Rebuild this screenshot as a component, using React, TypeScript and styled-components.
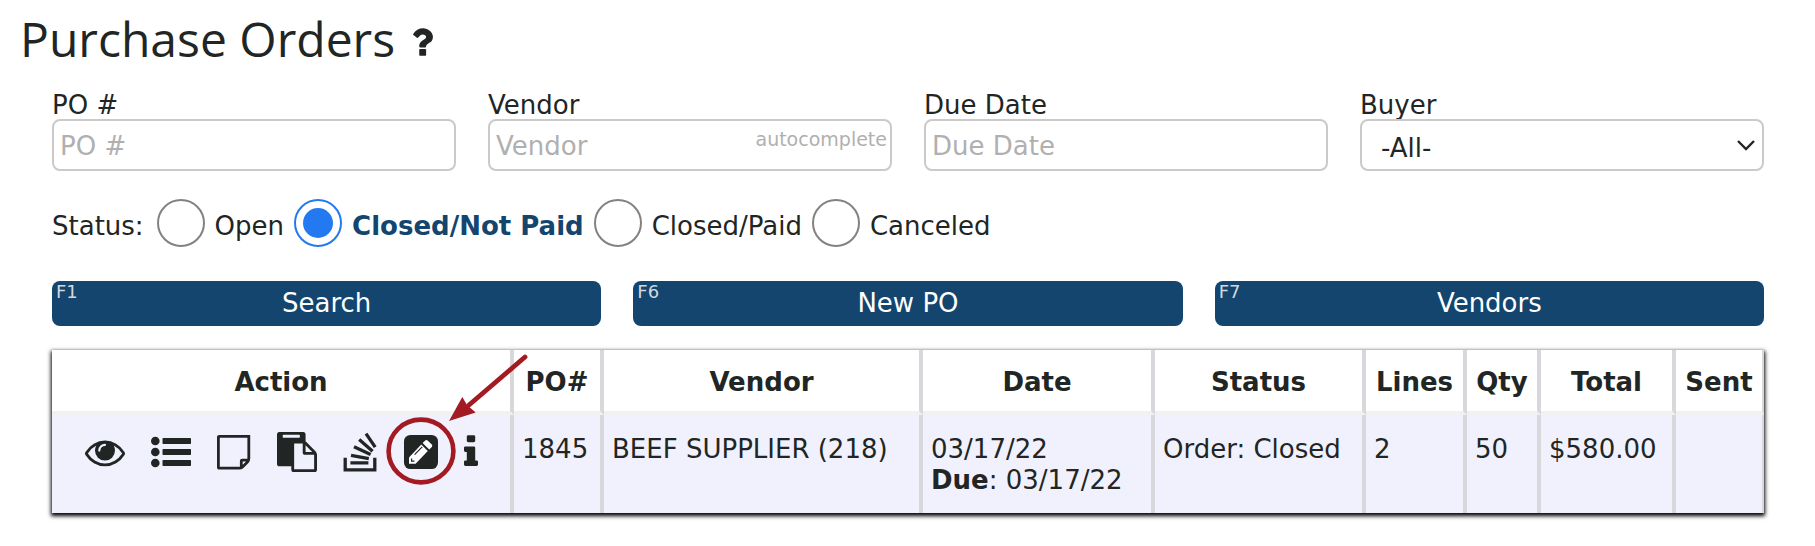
import React from "react";
import styled, { createGlobalStyle, css } from "styled-components";

const ink = "#212624";
const navy = "#13456f";
const red = "#a31a22";
const sans = `"DejaVu Sans", Verdana, sans-serif`;

const GlobalStyle = createGlobalStyle`
  * { box-sizing: border-box; }
  body {
    margin: 0;
    background: #fff;
    color: ${ink};
    font: 26px/31px ${sans};
  }
`;

const Page = styled.main`
  padding: 0 51px 32px 52px;
`;

const Header = styled.header`
  display: flex;
  align-items: center;
  gap: 16px;
  margin-left: -32px;
  padding-top: 4px;
`;

const Title = styled.h1`
  margin: 0;
  font: 400 48px/70px "Open Sans", "Segoe UI", sans-serif;
`;

const IconButton = styled.button`
  position: relative;
  display: flex;
  padding: 0;
  border: 0;
  background: none;
  color: inherit;
  cursor: pointer;
`;

const HelpButton = styled(IconButton)`
  padding-top: 6px;
`;

const Glyph = styled.svg`
  display: block;
  height: 40px;
  fill: currentColor;
`;

const Filters = styled.form`
  display: grid;
  grid-template-columns: repeat(4, 1fr);
  column-gap: 32px;
  margin-top: 17px;
`;

const Field = styled.div`
  position: relative;
  display: flex;
  flex-direction: column;
`;

const FieldLabel = styled.label`
  line-height: 28px;
`;

const control = css`
  width: 100%;
  height: 52px;
  border: 2px solid #cacacb;
  border-radius: 8px;
  background: transparent;
  color: ${ink};
  font: 26px/31px ${sans};
`;

const TextInput = styled.input`
  ${control}
  padding: 2px 6px 0;
  &::placeholder {
    color: #b0b0b0;
    opacity: 1;
  }
`;

const Select = styled.select`
  ${control}
  padding: 6px 40px 0 19px;
  appearance: none;
`;

const Chevron = styled.svg`
  position: absolute;
  right: 9px;
  bottom: 20px;
  width: 18px;
  height: 12px;
  pointer-events: none;
`;

const Hint = styled.span`
  position: absolute;
  right: 5px;
  top: 36px;
  color: #b0b0b0;
  font-size: 19px;
  line-height: 24px;
`;

const StatusGroup = styled.div`
  display: flex;
  align-items: center;
  gap: 10px;
  margin-top: 28px;
`;

const StatusText = styled.span`
  padding-top: 7px;
`;

const StatusOption = styled.label`
  display: flex;
  align-items: center;
  gap: 10px;
`;

const GroupTitle = styled(StatusText)`
  padding-right: 3px;
`;

const OptionText = styled(StatusText)`
  input:checked + & {
    color: ${navy};
    font-weight: 700;
  }
`;

const Radio = styled.input`
  width: 48px;
  height: 48px;
  margin: 0;
  appearance: none;
  border: 2px solid #858180;
  border-radius: 50%;
  display: grid;
  place-items: center;
  &:checked {
    border-color: #2379f0;
  }
  &:checked::before {
    content: "";
    width: 30px;
    height: 30px;
    border-radius: 50%;
    background: #2379f0;
  }
`;

const Actions = styled.div`
  display: grid;
  grid-template-columns: repeat(3, 1fr);
  column-gap: 32px;
  margin-top: 34px;
`;

const ActionButton = styled.button`
  position: relative;
  height: 45px;
  padding: 0;
  border: 0;
  border-radius: 8px;
  background: ${navy};
  color: #fff;
  font: 26px/31px ${sans};
  cursor: pointer;
`;

const Shortcut = styled.kbd`
  position: absolute;
  left: 4px;
  top: 0;
  color: #d4d8dc;
  font: 18px/22px ${sans};
`;

const Orders = styled.table`
  width: 100%;
  margin-top: 24px;
  table-layout: fixed;
  border-collapse: separate;
  border-spacing: 0;
  box-shadow: 0 2px 4px 1px #000;
`;

const Col = styled.col<{ $width?: number }>`
  width: ${(p) => (p.$width ? `${p.$width}px` : "auto")};
`;

const cell = css`
  border-right: 4px solid #d8d8dc;
  white-space: nowrap;
  &:last-child {
    border-right-width: 2px;
  }
`;

const HeadCell = styled.th`
  ${cell}
  height: 65px;
  padding: 3px 0 0;
  border-bottom: 4px solid #f1f1f2;
  background: #fff;
  font-weight: 700;
`;

const Cell = styled.td`
  ${cell}
  padding: 19px 8px 17px;
  background: #f1f1fd;
  vertical-align: top;
`;

const ActionCell = styled(Cell)`
  padding-top: 17px;
`;

const IconRow = styled.div`
  display: flex;
  justify-content: center;
  gap: 26px;
`;

const Callout = styled.svg`
  position: absolute;
  left: -18px;
  top: -79px;
  width: 144px;
  height: 134px;
  pointer-events: none;
`;

const questionPath =
  "M1088 1256v240q0 16-12 28t-28 12h-240q-16 0-28-12t-12-28v-240q0-16 12-28t28-12h240q16 0 28 12t12 28zm316-600q0 54-15.5 101t-35 76.5-55 59.5-57.5 43.5-61 35.5q-41 23-68.5 65t-27.5 67q0 17-12 32.5t-28 15.5h-240q-15 0-25.5-18.5t-10.5-37.5v-45q0-83 65-156.5t143-108.5q59-27 84-56t25-76q0-42-46.5-74t-107.5-32q-65 0-108 29-35 25-107 115-13 16-31 16-12 0-25-8l-164-125q-13-10-15.5-25t5.5-28q160-266 464-266 80 0 161 31t146 83 106 127.5 41 158.5z";
const eyePath =
  "M1664 960q-152-236-381-353 61 104 61 225 0 185-131.5 316.5t-316.5 131.5-316.5-131.5-131.5-316.5q0-121 61-225-229 117-381 353 133 205 333.5 326.5t434.5 121.5 434.5-121.5 333.5-326.5zm-720-384q0-20-14-34t-34-14q-125 0-214.5 89.5t-89.5 214.5q0 20 14 34t34 14 34-14 14-34q0-86 61-147t147-61q20 0 34-14t14-34zm848 384q0 34-20 69-140 230-376.5 368.5t-499.5 138.5-499.5-139-376.5-368q-20-35-20-69t20-69q140-229 376.5-368t499.5-139 499.5 139 376.5 368q20 35 20 69z";
const pastePath =
  "M768 1664h896v-640h-416q-40 0-68-28t-28-68v-416h-384v1152zm256-1440v-64q0-13-9.5-22.5t-22.5-9.5h-704q-13 0-22.5 9.5t-9.5 22.5v64q0 13 9.5 22.5t22.5 9.5h704q13 0 22.5-9.5t9.5-22.5zm256 672h299l-299-299v299zm512 128v672q0 40-28 68t-68 28h-960q-40 0-68-28t-28-68v-160h-544q-40 0-68-28t-28-68v-1344q0-40 28-68t68-28h1088q40 0 68 28t28 68v328q21 13 36 28l408 408q28 28 48 76t20 88z";
const infoPath =
  "M1216 1344v128q0 26-19 45t-45 19h-512q-26 0-45-19t-19-45v-128q0-26 19-45t45-19h64v-384h-64q-26 0-45-19t-19-45v-128q0-26 19-45t45-19h384q26 0 45 19t19 45v576h64q26 0 45 19t19 45zm-128-1152v192q0 26-19 45t-45 19h-256q-26 0-45-19t-19-45v-192q0-26 19-45t45-19h256q26 0 45 19t19 45z";

const EyeIcon = () => (
  <Glyph viewBox="0 0 1792 1792" width="40"><path d={eyePath} /></Glyph>
);

const ListIcon = () => (
  <Glyph viewBox="0 0 40 40" width="40">
    {[9, 20, 31].map((y) => (
      <g key={y}>
        <circle cx="4.3" cy={y} r="4.3" />
        <rect x="11.5" y={y - 2.9} width="28.5" height="5.8" rx="0.7" />
      </g>
    ))}
  </Glyph>
);

const NoteIcon = () => (
  <Glyph viewBox="0 0 34 40" width="34">
    <path
      d="M2.2 4.4h29.6v22.4q0 1.8-1.3 3.1l-5 5q-1.3 1.3-3.1 1.3H2.2q-.8 0-.8-.8V5.2q0-.8.8-.8zM24.3 36v-7q0-.8.8-.8h7"
      fill="none"
      stroke="currentColor"
      strokeWidth="2.8"
    />
  </Glyph>
);

const PasteIcon = () => (
  <Glyph viewBox="0 0 1792 1792" width="40"><path d={pastePath} /></Glyph>
);

const StackIcon = () => (
  <Glyph viewBox="0 0 35 40" width="35">
    <path
      d="M2.2 25.7v12.2h29.6V25.7M7.4 30.8h18M8 23.4l17.8 3.2M11 14.8l16.6 7.6M16.2 7.6l13.4 11.6M23 1.6l9.2 13.6"
      fill="none"
      stroke="currentColor"
      strokeWidth="3.3"
    />
  </Glyph>
);

const EditIcon = () => (
  <Glyph viewBox="0 0 34 40" width="34">
    <rect y="3" width="34" height="34" rx="6.4" />
    <path d="M5 25.5v6.3h6.6L23.8 19l-6.6-6.6z" fill="#fff" />
    <path d="M18.6 11l6.6 6.6 2.6-2.6q1-1.2 0-2.4l-4.2-4.2q-1.2-1-2.4 0z" fill="#fff" />
    <path d="M10.6 22.6l7.6-7.8M7.6 26.4v2.8h2.8" fill="none" stroke="currentColor" strokeWidth="1.2" />
  </Glyph>
);

const InfoIcon = () => (
  <Glyph viewBox="576 0 640 1792" width="14"><path d={infoPath} /></Glyph>
);

const EditCallout = () => (
  <Callout viewBox="386 352 144 134" aria-hidden="true">
    <ellipse cx="421" cy="450" rx="32.4" ry="31.4" fill="none" stroke={red} strokeWidth="4.6" />
    <path d="M469 404L525 356" stroke={red} strokeWidth="4.8" strokeLinecap="round" />
    <path d="M449 420L462.3 396l4.7 8 8.7 7.5z" fill={red} />
  </Callout>
);

const statuses = ["Open", "Closed/Not Paid", "Closed/Paid", "Canceled"];

const commands = [
  { keyName: "F1", label: "Search" },
  { keyName: "F6", label: "New PO" },
  { keyName: "F7", label: "Vendors" },
];

const columns: { label: string; width?: number }[] = [
  { label: "Action", width: 462 },
  { label: "PO#", width: 90 },
  { label: "Vendor" },
  { label: "Date", width: 232 },
  { label: "Status", width: 211 },
  { label: "Lines", width: 101 },
  { label: "Qty", width: 74 },
  { label: "Total", width: 135 },
  { label: "Sent", width: 88 },
];

const rowActions = [
  { label: "View", Icon: EyeIcon },
  { label: "Lines", Icon: ListIcon },
  { label: "Note", Icon: NoteIcon },
  { label: "Copy", Icon: PasteIcon },
  { label: "Receive", Icon: StackIcon },
  { label: "Edit", Icon: EditIcon, callout: true },
  { label: "Info", Icon: InfoIcon },
];

export default function App() {
  return (
    <>
      <GlobalStyle />
      <Page>
        <Header>
          <Title>Purchase Orders</Title>
          <HelpButton type="button" aria-label="Help">
            <Glyph viewBox="384 0 1024 1792" width="22"><path d={questionPath} /></Glyph>
          </HelpButton>
        </Header>

        <Filters>
          <Field>
            <FieldLabel htmlFor="po">PO #</FieldLabel>
            <TextInput id="po" placeholder="PO #" />
          </Field>
          <Field>
            <FieldLabel htmlFor="vendor">Vendor</FieldLabel>
            <TextInput id="vendor" placeholder="Vendor" />
            <Hint>autocomplete</Hint>
          </Field>
          <Field>
            <FieldLabel htmlFor="due">Due Date</FieldLabel>
            <TextInput id="due" placeholder="Due Date" />
          </Field>
          <Field>
            <FieldLabel htmlFor="buyer">Buyer</FieldLabel>
            <Select id="buyer">
              <option>-All-</option>
            </Select>
            <Chevron viewBox="0 0 18 12" aria-hidden="true">
              <path d="M1 2l8 8 8-8" fill="none" stroke={ink} strokeWidth="2.4" />
            </Chevron>
          </Field>
        </Filters>

        <StatusGroup role="radiogroup" aria-labelledby="status-label">
          <GroupTitle id="status-label">Status:</GroupTitle>
          {statuses.map((name) => (
            <StatusOption key={name}>
              <Radio type="radio" name="status" defaultChecked={name === "Closed/Not Paid"} />
              <OptionText>{name}</OptionText>
            </StatusOption>
          ))}
        </StatusGroup>

        <Actions>
          {commands.map((c) => (
            <ActionButton key={c.keyName} type="button">
              <Shortcut>{c.keyName}</Shortcut>
              {c.label}
            </ActionButton>
          ))}
        </Actions>

        <Orders>
          <colgroup>
            {columns.map((c) => (
              <Col key={c.label} $width={c.width} />
            ))}
          </colgroup>
          <thead>
            <tr>
              {columns.map((c) => (
                <HeadCell key={c.label} scope="col">{c.label}</HeadCell>
              ))}
            </tr>
          </thead>
          <tbody>
            <tr>
              <ActionCell>
                <IconRow>
                  {rowActions.map(({ label, Icon, callout }) => (
                    <IconButton key={label} type="button" aria-label={label}>
                      <Icon />
                      {callout && <EditCallout />}
                    </IconButton>
                  ))}
                </IconRow>
              </ActionCell>
              <Cell>1845</Cell>
              <Cell>BEEF SUPPLIER (218)</Cell>
              <Cell>
                03/17/22
                <br />
                <b>Due</b>: 03/17/22
              </Cell>
              <Cell>Order: Closed</Cell>
              <Cell>2</Cell>
              <Cell>50</Cell>
              <Cell>$580.00</Cell>
              <Cell />
            </tr>
          </tbody>
        </Orders>
      </Page>
    </>
  );
}
